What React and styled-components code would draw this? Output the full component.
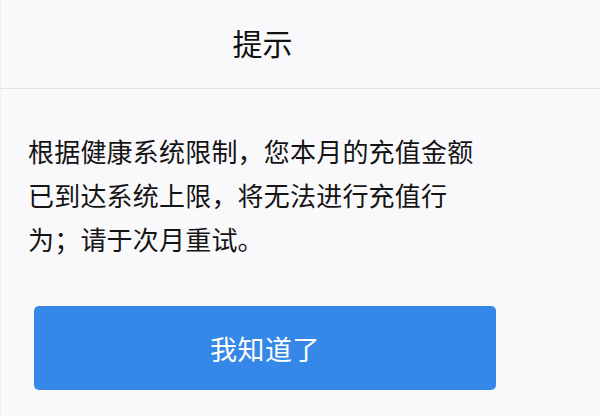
import React from "react";
import styled, { createGlobalStyle } from "styled-components";

const Global = createGlobalStyle`
  html, body { margin: 0; padding: 0; background: #f9f9fb; }
  body { font-family: "Noto Sans CJK SC", "Noto Sans", sans-serif; }
`;

const Dialog = styled.div`
  width: 600px;
  height: 416px;
  background: #f9f9fb;
  display: flex;
  flex-direction: column;
  box-sizing: border-box;
  border-left: 1px solid #f0f0f3;
`;

const Header = styled.div`
  height: 89px;
  display: flex;
  align-items: center;
  justify-content: center;
  border-bottom: 1px solid #e2e2e6;
  font-size: 30px;
  color: #111;
  padding: 0 76px 4px 0;
  box-sizing: border-box;
`;

const Body = styled.div`
  padding: 40px 0 0 27px;
  display: flex;
  flex-direction: column;
`;

const Message = styled.p`
  margin: 0;
  width: 456px;
  font-size: 26px;
  line-height: 44px;
  color: #141414;
  letter-spacing: 0.2px;
`;

const Button = styled.button`
  margin: 45px 0 0 6px;
  width: 462px;
  height: 84px;
  border: none;
  border-radius: 5px;
  background: #3587e8;
  color: #fff;
  font-family: inherit;
  font-size: 27px;
  letter-spacing: 0.5px;
  cursor: pointer;
`;

export default function App() {
  return (
    <>
      <Global />
      <Dialog>
        <Header>提示</Header>
        <Body>
          <Message>
            根据健康系统限制，您本月的充值金额已到达系统上限，将无法进行充值行为；请于次月重试。
          </Message>
          <Button>我知道了</Button>
        </Body>
      </Dialog>
    </>
  );
}
